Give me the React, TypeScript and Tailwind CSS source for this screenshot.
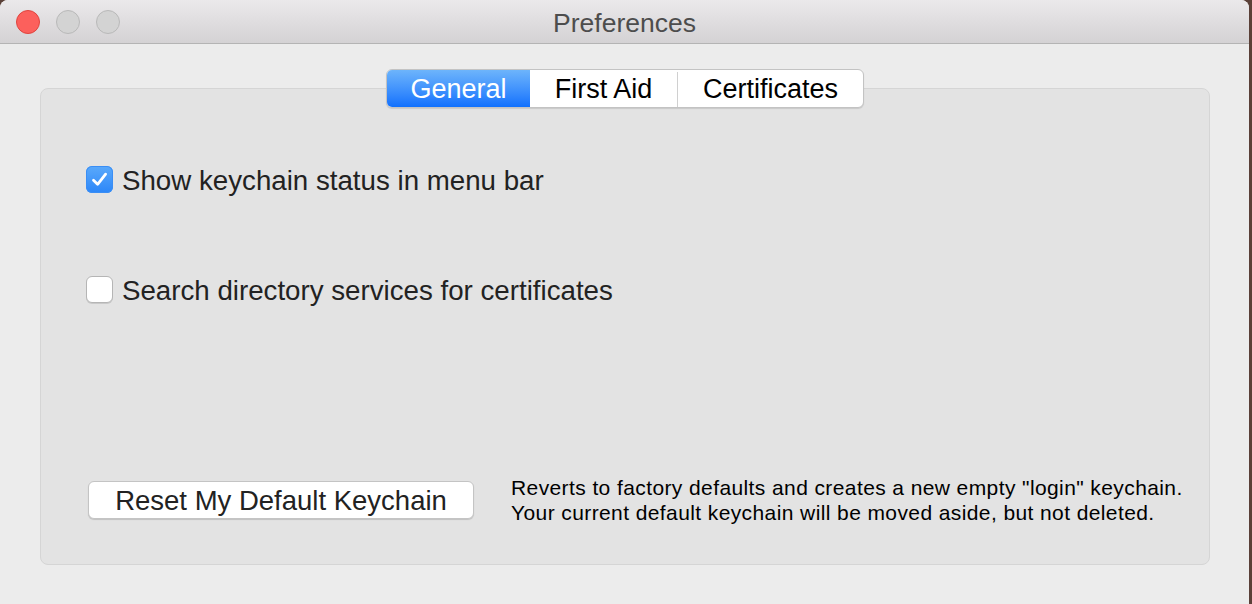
const font = { fontFamily: '"Liberation Sans", Arial, sans-serif' };

function Checkbox({ checked, label }: { checked: boolean; label: string }) {
  return (
    <label className="flex items-center gap-[9px]">
      {checked ? (
        <span className="flex h-[27px] w-[27px] items-center justify-center rounded-[6px] bg-gradient-to-b from-[#5aa9fb] to-[#2b86f8] shadow-[inset_0_0_0_1px_#3a8ef5]">
          <svg width="19" height="19" viewBox="0 0 19 19" fill="none">
            <path d="M3.5 10.2 L7.6 14.3 L15.6 4.2" stroke="white" strokeWidth="2.8" strokeLinecap="round" strokeLinejoin="round" />
          </svg>
        </span>
      ) : (
        <span className="h-[27px] w-[27px] rounded-[6px] border border-[#b5b5b5] bg-white shadow-[0_1px_0_#c9c9c9]" />
      )}
      <span className="pt-[2px] text-[27.7px] leading-none text-[#222]">{label}</span>
    </label>
  );
}

export default function App() {
  return (
    <div className="flex h-[604px] w-[1252px] overflow-hidden bg-[#5a4038]" style={font}>
      <div className="flex w-[1249px] flex-col overflow-hidden rounded-t-[8px] bg-[#ececec]">
        <header className="relative flex h-[44px] shrink-0 items-center border-b border-[#b4b4b4] bg-gradient-to-b from-[#ebe9eb] to-[#d4d2d4] pl-[16px]">
          <div className="flex gap-[16px]">
            <span className="h-[24px] w-[24px] rounded-full border border-[#e0443e] bg-[#fc605c]" />
            <span className="h-[24px] w-[24px] rounded-full border border-[#b9b9b9] bg-[#d3d3d3]" />
            <span className="h-[24px] w-[24px] rounded-full border border-[#b9b9b9] bg-[#d3d3d3]" />
          </div>
          <span className="absolute left-0 right-0 pt-[3px] text-center text-[26.5px] leading-none text-[#4d4d4d]">
            Preferences
          </span>
        </header>

        <main className="px-[40px] pt-[44px]">
          <div className="flex h-[477px] w-[1170px] flex-col rounded-[8px] border border-[#d5d5d5] bg-[#e3e3e3]">
            <nav className="relative z-10 mx-auto -mt-[20px] flex h-[39px] overflow-hidden rounded-[6px] border border-[#c3c3c3] bg-white pt-[2px] text-[27px] leading-none shadow-[0_1px_1px_rgba(0,0,0,0.12)]">
              <span className="-mt-[2px] flex w-[143px] items-center justify-center bg-gradient-to-b from-[#6db4fb] to-[#0f70fd] pt-[2px] text-white">
                General
              </span>
              <span className="flex w-[148px] items-center justify-center border-r border-[#d0d0d0] text-black">
                First Aid
              </span>
              <span className="flex w-[185px] items-center justify-center text-black">Certificates</span>
            </nav>

            <div className="flex flex-col gap-[80px] pl-[45px] pt-[57px]">
              <Checkbox checked label="Show keychain status in menu bar" />
              <Checkbox checked={false} label="Search directory services for certificates" />
            </div>

            <div className="mt-auto flex items-start gap-[37px] pb-[39px] pl-[47px]">
              <button className="mt-[6px] h-[38px] w-[386px] rounded-[6px] border border-[#c4c4c4] bg-white pt-[2px] text-[27.5px] leading-none text-[#222] shadow-[0_1px_1px_rgba(0,0,0,0.15)]">
                Reset My Default Keychain
              </button>
              <p className="text-[21px] leading-[25px] tracking-[0.4px] text-black">
                Reverts to factory defaults and creates a new empty "login" keychain.
                <br />
                Your current default keychain will be moved aside, but not deleted.
              </p>
            </div>
          </div>
        </main>
      </div>
    </div>
  );
}
